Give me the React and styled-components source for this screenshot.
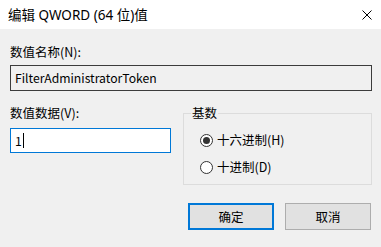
import React from 'react';
import styled, { createGlobalStyle } from 'styled-components';

const GlobalStyle = createGlobalStyle`
  html, body {
    margin: 0;
    padding: 0;
    background: #f0f0f0;
  }
  * {
    box-sizing: border-box;
  }
`;

const Window = styled.div`
  width: 381px;
  height: 247px;
  display: flex;
  flex-direction: column;
  background: #f0f0f0;
  font-family: 'Noto Sans CJK SC', 'Noto Sans', sans-serif;
  font-size: 12.5px;
  color: #000;
  overflow: hidden;
`;

const TitleBar = styled.div`
  height: 29px;
  flex: none;
  display: flex;
  align-items: center;
  justify-content: space-between;
  padding: 0 9px 0 8px;
  background: #fff;
`;

const Title = styled.span`
  font-family: 'Noto Sans', 'Noto Sans CJK SC', sans-serif;
  font-size: 13.5px;
  line-height: 16px;
`;

const Close = styled.span`
  display: flex;
  width: 10px;
  height: 10px;
`;

const Body = styled.div`
  padding: 0 9px 0 10px;
  display: flex;
  flex-direction: column;
`;

const Label = styled.div`
  line-height: 16px;
  height: 16px;
  margin-top: ${(p) => p.$top || 0}px;
`;

const Field = styled.div`
  display: flex;
  align-items: center;
  height: ${(p) => p.$height}px;
  margin-top: ${(p) => p.$top}px;
  padding-left: 4px;
  border: 1px solid ${(p) => (p.$active ? '#0078d7' : '#3c3c3c')};
  background: ${(p) => (p.$active ? '#fff' : '#f0f0f0')};
  font-size: 12.2px;
  white-space: nowrap;
`;

const Caret = styled.span`
  display: inline-block;
  width: 1px;
  height: 15px;
  margin-left: 1px;
  background: #000;
`;

const Row = styled.div`
  display: grid;
  grid-template-columns: 161px 189px;
  column-gap: 12px;
  margin-top: 14px;
`;

const Column = styled.div`
  display: flex;
  flex-direction: column;
`;

const Group = styled.fieldset`
  margin: 0;
  height: 80px;
  padding: 11px 0 0 0;
  border: 1px solid #dcdcdc;
  display: flex;
  flex-direction: column;
  gap: 11px;
`;

const Legend = styled.legend`
  padding: 0 1px;
  margin-left: 7px;
  line-height: 16px;
`;

const Option = styled.label`
  display: flex;
  align-items: center;
  gap: 4px;
  padding-left: 16px;
  line-height: 16px;
`;

const Radio = styled.span`
  width: 13px;
  height: 13px;
  border: 1px solid #333;
  border-radius: 50%;
  background: #fff;
  display: flex;
  align-items: center;
  justify-content: center;

  &::after {
    content: '';
    width: 7px;
    height: 7px;
    border-radius: 50%;
    background: ${(p) => (p.$checked ? '#333' : 'transparent')};
  }
`;

const Buttons = styled.div`
  display: flex;
  justify-content: flex-end;
  gap: 11px;
  margin-top: 18px;
  padding-right: 1px;
`;

const Button = styled.button`
  width: 86px;
  height: 27px;
  padding: 0;
  font: inherit;
  color: #000;
  background: #e1e1e1;
  border: ${(p) => (p.$default ? '2px solid #0078d7' : '1px solid #adadad')};
  border-radius: 0;
`;

export default function App() {
  return (
    <Window>
      <GlobalStyle />
      <TitleBar>
        <Title>编辑 QWORD (64 位)值</Title>
        <Close>
          <svg width="10" height="10" viewBox="0 0 10 10">
            <path d="M0.5 0.5 L9.5 9.5 M9.5 0.5 L0.5 9.5" stroke="#000" strokeWidth="1" />
          </svg>
        </Close>
      </TitleBar>
      <Body>
        <Label $top={15}>数值名称(N):</Label>
        <Field $height={26} $top={5}>FilterAdministratorToken</Field>
        <Row>
          <Column>
            <Label>数值数据(V):</Label>
            <Field $height={25} $top={7} $active>
              1<Caret />
            </Field>
          </Column>
          <Group>
            <Legend>基数</Legend>
            <Option>
              <Radio $checked />
              十六进制(H)
            </Option>
            <Option>
              <Radio />
              十进制(D)
            </Option>
          </Group>
        </Row>
        <Buttons>
          <Button $default>确定</Button>
          <Button>取消</Button>
        </Buttons>
      </Body>
    </Window>
  );
}
